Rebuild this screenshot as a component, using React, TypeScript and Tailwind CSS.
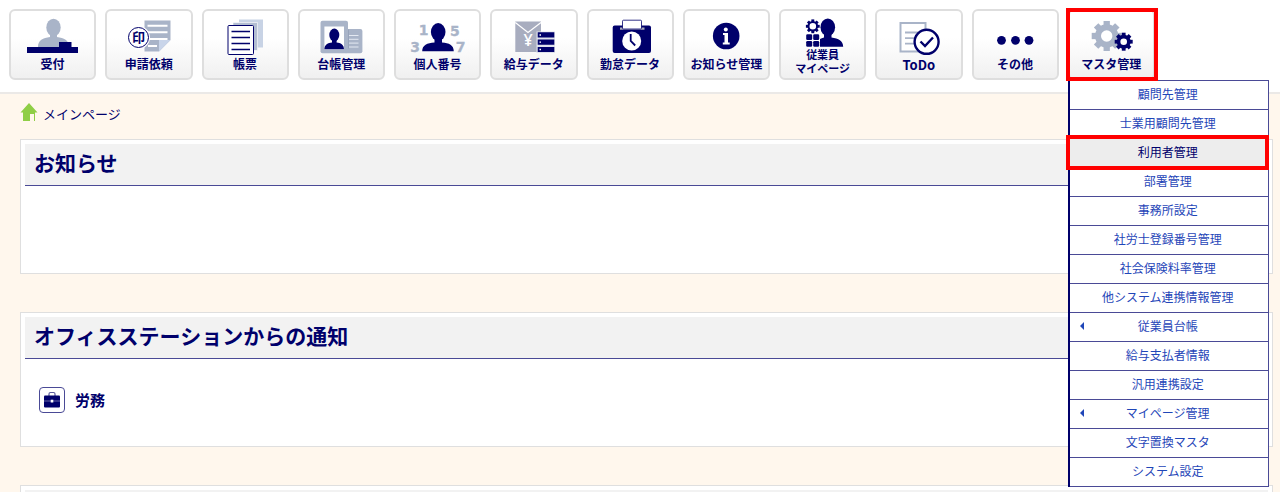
import type { ReactNode } from "react";

const NAVY = "#00006b";
const GRAY = "#a9b4c8";

function Gear({ cx, cy, r, hole, color }: { cx: number; cy: number; r: number; hole: number; color: string }) {
  const inner = r * 0.78;
  const tooth = r * 0.42;
  return (
    <g transform={`translate(${cx} ${cy})`}>
      {[0, 45, 90, 135].map((angle) => (
        <g key={angle} transform={`rotate(${angle})`} fill={color}>
          <rect x={-tooth / 2} y={-r} width={tooth} height={r - hole - 1} />
          <rect x={-tooth / 2} y={hole + 1} width={tooth} height={r - hole - 1} />
        </g>
      ))}
      <circle r={(inner + hole) / 2} fill="none" stroke={color} strokeWidth={inner - hole} />
    </g>
  );
}

const icons: Record<string, ReactNode> = {
  reception: (
    <>
      <ellipse cx="41.5" cy="16.5" rx="7.2" ry="8.8" fill={GRAY} />
      <path d="M38 22h7v4c7 1 12 3 12 10H26c0-7 5-9 12-10z" fill={GRAY} />
      <path d="M15 36h32v-5h12.500v5H66v6H15z" fill={NAVY} />
    </>
  ),
  request: (
    <>
      <path d="M36.500 9.500h26V29L51 40.500H36.500z" fill={GRAY} />
      <path d="M39.500 14.700h20M39.500 21.300h20M39.500 28h20M40 35h9" stroke="#fff" strokeWidth="2" />
      <path d="M51 29h11.500L51 40.500z" fill="#c9d5ea" />
      <circle cx="30.500" cy="26.500" r="10" fill="#fff" stroke="#fff" strokeWidth="3" />
      <circle cx="30.500" cy="26.500" r="10" fill="#fff" stroke={NAVY} strokeWidth="1" />
      <text x="30.500" y="31" textAnchor="middle" fontSize="13" fontWeight="700" fill={NAVY}>
        印
      </text>
    </>
  ),
  forms: (
    <>
      <path d="M35 8.500h24v28H35z" fill="#c8d3e5" />
      <path d="M29 11.500h24.500v28H29z" fill="#b3bed2" stroke="#fff" strokeWidth=".6" />
      <rect x="24" y="14.500" width="25.500" height="29" rx="1" fill="#fff" stroke={NAVY} />
      <path d="M27.500 20.500h18.500M27.500 26.500h18.500M27.500 32.500h18.500M27.500 38.500h18.500" stroke={NAVY} strokeWidth="1.600" />
    </>
  ),
  ledger: (
    <>
      <rect x="20.500" y="9.700" width="27.500" height="32.600" rx="2" fill={GRAY} />
      <rect x="44" y="18" width="18.400" height="24.300" rx="2" fill={GRAY} />
      <path d="M48.500 18.500v19" stroke="#8f9cb5" strokeWidth=".7" />
      <path d="M24.400 15.500H44v23H24.400z" fill="#fff" />
      <ellipse cx="34.300" cy="24" rx="5" ry="6.500" fill={NAVY} />
      <path d="M32 28h4.600v3.500c4 .5 7.400 2 7.400 6.800H24.400c0-4.800 3.600-6.300 7.600-6.800z" fill={NAVY} />
      <path d="M49 24.500h9.500M49 28.300h9.500M49 32.100h9.500M49 36h9.500" stroke="#e4e9f2" strokeWidth="1" />
    </>
  ),
  number: (
    <>
      <g fill={GRAY} stroke={GRAY} strokeWidth=".3" fontFamily="DejaVu Sans" fontSize="14" textAnchor="middle">
        <text x="26.500" y="24">1</text>
        <text x="57.800" y="25">5</text>
        <text x="18.200" y="41">3</text>
        <text x="63.500" y="41">7</text>
      </g>
      <ellipse cx="41.200" cy="21" rx="7.300" ry="9" fill={NAVY} />
      <path d="M37.500 27h7.500v4.500c7 .5 11.800 2.500 11.800 8.800H25.200c0-6.300 5-8.300 12.300-8.800z" fill={NAVY} />
    </>
  ),
  payroll: (
    <>
      <path d="M22.300 10.500H48V41H22.300z" fill="#a8adbf" />
      <path d="M22.300 11.500L35 21.500l13-10" fill="none" stroke="#fff" strokeWidth="1.200" />
      <text x="35" y="35" textAnchor="middle" fontFamily="Open Sans" fontSize="16" fontWeight="600" fill="#fff">
        ¥
      </text>
      <path d="M43.500 20.500H62V42H43.500z" fill="#dfe2ec" />
      <path d="M44.700 21.300h16.600v5.200H44.700zM44.700 28.600h16.600v5.200H44.700zM44.700 35.900h16.600v5.200H44.700z" fill={NAVY} />
      <path d="M46.500 24h1.500M46.500 31.200h1.500M46.500 38.500h1.500" stroke="#fff" strokeWidth="1.300" />
    </>
  ),
  attendance: (
    <>
      <rect x="23.700" y="14.500" width="38.300" height="27.500" rx="2" fill={NAVY} />
      <path d="M31 17.700h24.500" stroke="#aab" strokeWidth="2.200" />
      <rect x="33.500" y="9.200" width="19" height="8.800" rx="1" fill="#fff" stroke={NAVY} strokeWidth=".8" />
      <circle cx="42.700" cy="30" r="9.500" fill="#fff" />
      <path d="M41.700 23v7l4.500 4.500" fill="none" stroke={NAVY} strokeWidth="1.800" />
    </>
  ),
  info: (
    <>
      <circle cx="41.200" cy="25" r="13.300" fill={NAVY} />
      <circle cx="40.800" cy="18.500" r="2" fill="#fff" />
      <path d="M38 22h5v9.500h1.700V33.500H37.800V31.500h1.700V24H38z" fill="#fff" />
    </>
  ),
  mypage: (
    <>
      <Gear cx={30.800} cy={15.300} r={6.900} hole={3.300} color={NAVY} />
      <g fill={NAVY}>
        <rect x="24.200" y="23.300" width="6" height="5.800" rx="1.300" />
        <rect x="31.200" y="23.300" width="6" height="5.800" rx="1.300" />
        <rect x="24.200" y="30" width="6" height="5.800" rx="1.300" />
        <rect x="31.200" y="30" width="6" height="5.800" rx="1.300" />
        <ellipse cx="45.800" cy="16.300" rx="7.300" ry="8.800" />
        <path d="M42 22h7.500v4.500c7 1 11.700 3.500 11.700 9.300H38V28c1-.6 2.400-1 4-1.500z" />
      </g>
    </>
  ),
  todo: (
    <>
      <path d="M22.500 12h25v28.500h-25z" fill="#fff" stroke={GRAY} strokeWidth="2" />
      <path d="M27 21.500h13M27 27.200h10M27 32.700h10" stroke={GRAY} strokeWidth="1.800" />
      <circle cx="48.600" cy="30.800" r="12" fill="#fff" stroke={NAVY} strokeWidth="2.400" />
      <path d="M42.500 30.500l4.500 4.500 8-8.500" fill="none" stroke={NAVY} strokeWidth="2.400" />
    </>
  ),
  other: (
    <g fill={NAVY}>
      <circle cx="27.500" cy="29.300" r="4.400" />
      <circle cx="41.500" cy="29.300" r="4.400" />
      <circle cx="55" cy="29.300" r="4.400" />
    </g>
  ),
  master: (
    <>
      <Gear cx={36.700} cy={25} r={15} hole={5.700} color={GRAY} />
      <Gear cx={53.700} cy={30.700} r={9} hole={3.300} color={NAVY} />
    </>
  ),
};

const tools = [
  { icon: "reception", label: "受付" },
  { icon: "request", label: "申請依頼" },
  { icon: "forms", label: "帳票" },
  { icon: "ledger", label: "台帳管理" },
  { icon: "number", label: "個人番号" },
  { icon: "payroll", label: "給与データ" },
  { icon: "attendance", label: "勤怠データ" },
  { icon: "info", label: "お知らせ管理" },
  { icon: "mypage", label: "従業員", label2: "マイページ" },
  { icon: "todo", label: "ToDo" },
  { icon: "other", label: "その他" },
  { icon: "master", label: "マスタ管理" },
];

const menuItems = [
  { name: "顧問先管理" },
  { name: "士業用顧問先管理" },
  { name: "利用者管理", current: true },
  { name: "部署管理" },
  { name: "事務所設定" },
  { name: "社労士登録番号管理" },
  { name: "社会保険料率管理" },
  { name: "他システム連携情報管理" },
  { name: "従業員台帳", sub: true },
  { name: "給与支払者情報" },
  { name: "汎用連携設定" },
  { name: "マイページ管理", sub: true },
  { name: "文字置換マスタ" },
  { name: "システム設定" },
];

function ToolButton({ icon, label, label2 }: { icon: string; label: string; label2?: string }) {
  return (
    <button
      type="button"
      className="flex h-[71px] w-full flex-col items-center overflow-hidden whitespace-nowrap rounded-md border-2 border-[#dedede] bg-linear-to-b from-white from-40% to-[#f0f0f0] font-bold text-[#00006b]"
    >
      <svg
        width="82"
        height={label2 ? 37 : 45}
        viewBox={label2 ? "0 0 82 37" : "0 0 82 45"}
        className="shrink-0"
        aria-hidden="true"
      >
        {icons[icon]}
      </svg>
      {label2 ? (
        <span className="flex flex-col font-['Liberation_Sans','Noto_Sans_CJK_JP',sans-serif] text-[11px] leading-[14px]">
          <span>{label}</span>
          <span>{label2}</span>
        </span>
      ) : (
        <span className={icon === "todo" ? "text-[13px] leading-[18px]" : "text-xs leading-4"}>{label}</span>
      )}
    </button>
  );
}

function MasterMenu() {
  return (
    <ul className="absolute left-0 top-full z-10 w-[201px] border border-l-2 border-b-0 border-[#4a4a96] border-l-[#00006b] bg-white">
      {menuItems.map(({ name, current, sub }) => (
        <li key={name} className="relative border-b border-[#4a4a96]">
          <a
            href="#"
            className={`flex h-7 items-center justify-center pr-0.5 pb-0.5 text-xs ${
              current ? "bg-[#ededed] text-[#00006b]" : "text-[#1f46b8]"
            }`}
          >
            {sub && (
              <svg width="4" height="8" viewBox="0 0 4 8" className="absolute left-2.5" aria-hidden="true">
                <path d="M4 0v8L0 4z" fill="#1f46b8" />
              </svg>
            )}
            {name}
          </a>
          {current && (
            <span className="pointer-events-none absolute -top-1 -right-px -bottom-[3px] -left-1 border-4 border-[#ff0000]" />
          )}
        </li>
      ))}
    </ul>
  );
}

function Panel({ title, children }: { title?: string; children?: ReactNode }) {
  return (
    <section className="min-h-[135px] shrink-0 border border-[#dfdfdf] bg-white p-1">
      <h2 className="h-[42px] border-b border-[#4a4a96] bg-[#f2f2f2] px-[9px] text-[21px] leading-9 font-bold">
        {title}
      </h2>
      {children}
    </section>
  );
}

export default function App() {
  return (
    <div className="flex h-screen flex-col bg-[#fff7ed] font-['Noto_Sans_CJK_JP','Noto_Sans',sans-serif] text-[#00006b]">
      <header className="border-b-2 border-[#ebe9e7] bg-white px-[9px] pt-[9px] pb-3">
        <nav className="grid max-w-[1146px] grid-cols-12 gap-[9px]">
          {tools.map((tool) => (
            <div key={tool.icon} className="relative">
              <ToolButton {...tool} />
              {tool.icon === "master" && (
                <>
                  <MasterMenu />
                  <span className="pointer-events-none absolute -top-px -right-[3px] -bottom-px -left-0.5 z-20 border-4 border-[#ff0000]" />
                </>
              )}
            </div>
          ))}
        </nav>
      </header>

      <main className="flex-1 overflow-hidden pt-[9px] pr-[7px] pl-5">
        <div className="flex h-6 items-start gap-[5px] text-[13px] leading-[22px]">
          <svg width="18" height="18" viewBox="0 0 18 18" className="shrink-0" aria-hidden="true">
            <path d="M9 0l8.500 9.500H15V18h-1v-7h-4v7H3V9.500H.500z" fill="#8fce46" />
          </svg>
          <span>メインページ</span>
        </div>
        <div className="mt-3 flex flex-col gap-[38px]">
          <Panel title="お知らせ" />
          <Panel title="オフィスステーションからの通知">
            <div className="flex items-center gap-2.5 px-3.5 pt-7">
              <span className="flex size-[26px] items-center justify-center rounded border border-[#4a4a96]">
                <svg width="18" height="18" viewBox="0 0 18 18" aria-hidden="true">
                  <path d="M6 5V3q0-1.500 1.500-1.500h3Q12 1.500 12 3v2" fill="none" stroke="#5a5a9c" strokeWidth="1.200" />
                  <rect x="1" y="4.500" width="16" height="12" rx="1" fill={NAVY} />
                  <path d="M1 10h16" stroke="#8484b8" strokeWidth=".8" />
                  <rect x="7.700" y="8.700" width="2.600" height="2.800" fill="#fff" />
                </svg>
              </span>
              <h3 className="text-[15px] font-bold">労務</h3>
            </div>
          </Panel>
          <Panel />
        </div>
      </main>
    </div>
  );
}
